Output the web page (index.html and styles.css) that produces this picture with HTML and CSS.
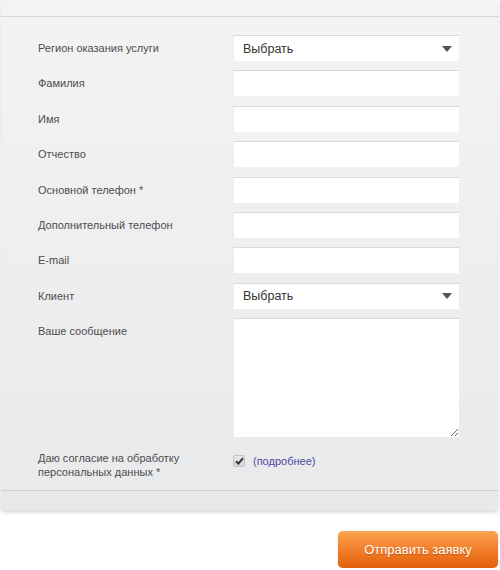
FILE: index.html
```html
<!DOCTYPE html>
<html lang="ru">
<head>
<meta charset="utf-8">
<title>Форма заявки</title>
<link rel="stylesheet" href="styles.css">
</head>
<body>
<form class="order">
  <div class="panel">
    <div class="panel-top"></div>
    <div class="panel-body">
      <div class="row">
        <label class="lbl">Регион оказания услуги</label>
        <div class="select"><span>Выбрать</span><i class="arrow"></i></div>
      </div>
      <div class="row">
        <label class="lbl">Фамилия</label>
        <input class="field" type="text">
      </div>
      <div class="row">
        <label class="lbl">Имя</label>
        <input class="field" type="text">
      </div>
      <div class="row">
        <label class="lbl">Отчество</label>
        <input class="field" type="text">
      </div>
      <div class="row">
        <label class="lbl">Основной телефон *</label>
        <input class="field" type="text">
      </div>
      <div class="row">
        <label class="lbl">Дополнительный телефон</label>
        <input class="field" type="text">
      </div>
      <div class="row">
        <label class="lbl">E-mail</label>
        <input class="field" type="text">
      </div>
      <div class="row">
        <label class="lbl">Клиент</label>
        <div class="select"><span>Выбрать</span><i class="arrow"></i></div>
      </div>
      <div class="row">
        <label class="lbl">Ваше сообщение</label>
        <textarea class="area"></textarea>
      </div>
      <div class="row consent">
        <label class="lbl">Даю согласие на обработку персональных данных *</label>
        <div class="check-wrap">
          <span class="check"><svg width="9" height="8" viewBox="0 0 9 8"><path d="M1 4.2 L3.4 6.6 L8 1.2" fill="none" stroke="#333" stroke-width="2"/></svg></span>
          <a class="more" href="#">(подробнее)</a>
        </div>
      </div>
    </div>
    <div class="panel-bottom"></div>
  </div>
  <div class="actions">
    <button class="submit" type="button">Отправить заявку</button>
  </div>
</form>
</body>
</html>
```
FILE: styles.css
```css
* { box-sizing: border-box; }
body {
  margin: 0;
  background: #fff;
  font-family: "Liberation Sans", Arial, sans-serif;
  font-size: 11px;
  color: #4d4d4d;
}
.panel {
  margin: 0 2px 0 1px;
  border-radius: 0 0 3px 3px;
  background: #f0f0f0;
  box-shadow: 0 2px 4px rgba(0,0,0,0.18);
}
.panel-top {
  height: 17px;
  background: #f3f3f3;
  border-bottom: 1px solid #d4d4d4;
}
.panel-body {
  padding: 18px 39px 11px 37px;
  background: linear-gradient(#f3f3f3, #e9eaec);
  display: flex;
  flex-direction: column;
  gap: 9.4px;
}
.panel-bottom {
  height: 20px;
  border-top: 1px solid #d0d0d0;
  background: #e8e9eb;
  border-radius: 0 0 3px 3px;
}
.row {
  display: flex;
  align-items: flex-start;
}
.lbl {
  width: 195px;
  flex: none;
  padding-top: 6px;
  line-height: 14px;
}
.field, .select, .area {
  width: 226px;
  height: 26px;
  background: #fff;
  border: 0;
  border-top: 1px solid #d9d9d9;
  border-left: 1px solid #ececec;
  font: inherit;
  margin: 0;
  padding: 0 9px;
}
.select {
  display: flex;
  align-items: center;
  justify-content: space-between;
  color: #333;
  font-size: 12.5px;
  padding-right: 6px;
}
.arrow {
  width: 0;
  height: 0;
  border-left: 5px solid transparent;
  border-right: 5px solid transparent;
  border-top: 6px solid #555;
  margin-right: 1px;
}
.area {
  height: 119px;
  resize: both;
  padding: 4px;
}
.consent { margin-top: 4px; }
.consent .lbl { padding-top: 0; width: 195px; padding-right: 40px; }
.check-wrap {
  display: flex;
  align-items: center;
  gap: 8px;
  padding-top: 4px;
  font-size: 11px;
}
.check {
  width: 12px;
  height: 12px;
  border-radius: 2px;
  background: linear-gradient(#e8e8e8, #d6d6d6);
  border: 1px solid #c4c4c4;
  display: flex;
  align-items: center;
  justify-content: center;
}
.more {
  color: #4f47a6;
  text-decoration: none;
}
.actions {
  display: flex;
  justify-content: flex-end;
  padding: 21px 2px 0 0;
}
.submit {
  width: 160px;
  height: 37px;
  border: 0;
  border-radius: 5px;
  background: linear-gradient(#fba552, #f17b26 55%, #e2600d);
  color: #fff;
  font-family: "Liberation Sans", Arial, sans-serif;
  font-size: 13px;
  text-shadow: 0 1px 1px rgba(150,60,0,0.5);
  box-shadow: 0 1px 2px rgba(0,0,0,0.2);
  cursor: pointer;
}
```
